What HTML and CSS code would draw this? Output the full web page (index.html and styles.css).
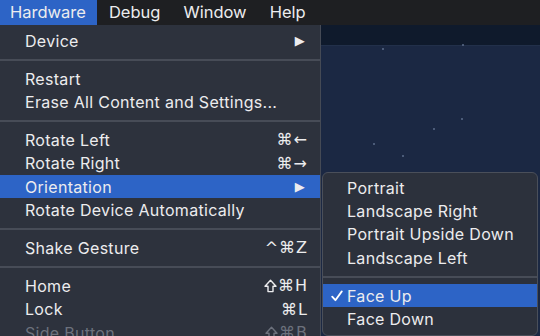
FILE: index.html
```html
<!DOCTYPE html>
<html lang="en">
<head>
    <meta charset="UTF-8">
    <meta name="viewport" content="width=device-width, initial-scale=1">
    <title>Simulator - Hardware menu</title>
    <link rel="stylesheet" href="styles.css">
</head>
<body>
    <div class="menubar">
        <span class="menubar-item active">Hardware</span>
        <span class="menubar-item">Debug</span>
        <span class="menubar-item">Window</span>
        <span class="menubar-item">Help</span>
    </div>

    <div class="workspace">
        <div class="menu main-menu">
            <div class="menu-row"><span>Device</span><span class="arrow">&#9654;</span></div>
            <div class="menu-sep"></div>
            <div class="menu-row"><span>Restart</span></div>
            <div class="menu-row"><span>Erase All Content and Settings...</span></div>
            <div class="menu-sep"></div>
            <div class="menu-row"><span>Rotate Left</span><span class="keys">&#8984;&#8592;</span></div>
            <div class="menu-row"><span>Rotate Right</span><span class="keys">&#8984;&#8594;</span></div>
            <div class="menu-row selected"><span>Orientation</span><span class="arrow">&#9654;</span></div>
            <div class="menu-row"><span>Rotate Device Automatically</span></div>
            <div class="menu-sep"></div>
            <div class="menu-row"><span>Shake Gesture</span><span class="keys">^&#8984;Z</span></div>
            <div class="menu-sep"></div>
            <div class="menu-row">
                <span>Home</span>
                <span class="keys">
                    <svg class="shift" width="13" height="14" viewBox="0 0 13 14"><path d="M6.5 1.2 L12 7.2 H9 V12.6 H4 V7.2 H1 Z" fill="none" stroke="currentColor" stroke-width="1.4" stroke-linejoin="round"/></svg>&#8984;H
                </span>
            </div>
            <div class="menu-row"><span>Lock</span><span class="keys">&#8984;L</span></div>
            <div class="menu-row disabled">
                <span>Side Button</span>
                <span class="keys">
                    <svg class="shift" width="13" height="14" viewBox="0 0 13 14"><path d="M6.5 1.2 L12 7.2 H9 V12.6 H4 V7.2 H1 Z" fill="none" stroke="currentColor" stroke-width="1.4" stroke-linejoin="round"/></svg>&#8984;B
                </span>
            </div>
        </div>

        <div class="desktop">
            <div class="desktop-top"></div>
            <!-- stars on the simulator wallpaper -->
            <i class="star" style="left: 141px; top: 19px;"></i>
            <i class="star" style="left: 61px; top: 23px;"></i>
            <i class="star" style="left: 140px; top: 93px;"></i>
            <i class="star" style="left: 112px; top: 103px;"></i>
            <i class="star" style="left: 52px; top: 118px;"></i>
            <i class="star" style="left: 81px; top: 130px;"></i>

            <div class="menu sub-menu">
                <div class="menu-row"><span>Portrait</span></div>
                <div class="menu-row"><span>Landscape Right</span></div>
                <div class="menu-row"><span>Portrait Upside Down</span></div>
                <div class="menu-row"><span>Landscape Left</span></div>
                <div class="menu-sep"></div>
                <div class="menu-row selected">
                    <svg class="check" width="12" height="12" viewBox="0 0 12 12">
                        <path d="M1.2 6.6 L4.4 10.2 L10.8 1.4" fill="none" stroke="#fff" stroke-width="1.8" stroke-linecap="round" stroke-linejoin="round"/>
                    </svg>
                    <span>Face Up</span>
                </div>
                <div class="menu-row"><span>Face Down</span></div>
            </div>
        </div>
    </div>
</body>
</html>
```

FILE: styles.css
```css
html, body {
    margin: 0;
    height: 100%;
    background-color: #1b2843;
    font-family: 'Inter', 'Liberation Sans', sans-serif;
    color: #ececee;
    overflow: hidden;
}

body {
    display: flex;
    flex-direction: column;
    width: 540px;
    height: 336px;
}

.menubar {
    display: flex;
    height: 25px;
    background-color: #1e1f22;
    font-size: 16.5px;
    line-height: 24px;
    flex-shrink: 0;
}

.menubar-item {
    padding: 0 11px 0 12px;
}

.menubar-item:first-child {
    padding-left: 10px;
}

.menubar-item.active {
    background-color: #2d64c6;
}

.workspace {
    display: flex;
    flex: 1;
    min-height: 0;
}

.menu {
    background-color: #2d323d;
    font-size: 16px;
    letter-spacing: 0.3px;
}

.main-menu {
    width: 320px;
    padding-top: 4px;
    border-right: 1px solid #454a55;
    overflow: hidden;
    flex-shrink: 0;
}

.menu-row {
    display: flex;
    align-items: center;
    justify-content: space-between;
    height: 23.33px;
    padding: 0 12px 0 25px;
}

.menu-row.selected {
    background-color: #2d64c6;
}

.menu-row.disabled {
    color: #6c717c;
}

.menu-sep {
    height: 14.67px;
    display: flex;
    align-items: center;
}

.menu-sep::before {
    content: "";
    flex: 1;
    height: 2px;
    background-color: #474c57;
}

.arrow {
    font-family: 'DejaVu Sans', sans-serif;
    font-size: 13px;
    padding-right: 3px;
}

.keys {
    display: flex;
    align-items: center;
    font-family: 'DejaVu Sans', sans-serif;
    font-size: 16px;
    letter-spacing: 1px;
}

.shift {
    margin-right: 1px;
}

.desktop {
    position: relative;
    flex: 1;
    background-color: #1b2843;
}

.desktop-top {
    height: 20px;
    background-color: #0f1a2c;
    border-bottom: 1px solid #22304a;
}

.star {
    position: absolute;
    width: 2px;
    height: 2px;
    border-radius: 1px;
    background-color: #5d6d8a;
}

.sub-menu {
    position: absolute;
    left: 1px;
    top: 147px;
    width: 214px;
    padding: 3px 0 4px;
    border: 1px solid #4a4f5a;
    border-radius: 6px;
    background-color: #2c313c;
}

.sub-menu .menu-row {
    justify-content: flex-start;
    padding-left: 24px;
    position: relative;
}

.check {
    position: absolute;
    left: 8px;
    top: 6px;
}
```
